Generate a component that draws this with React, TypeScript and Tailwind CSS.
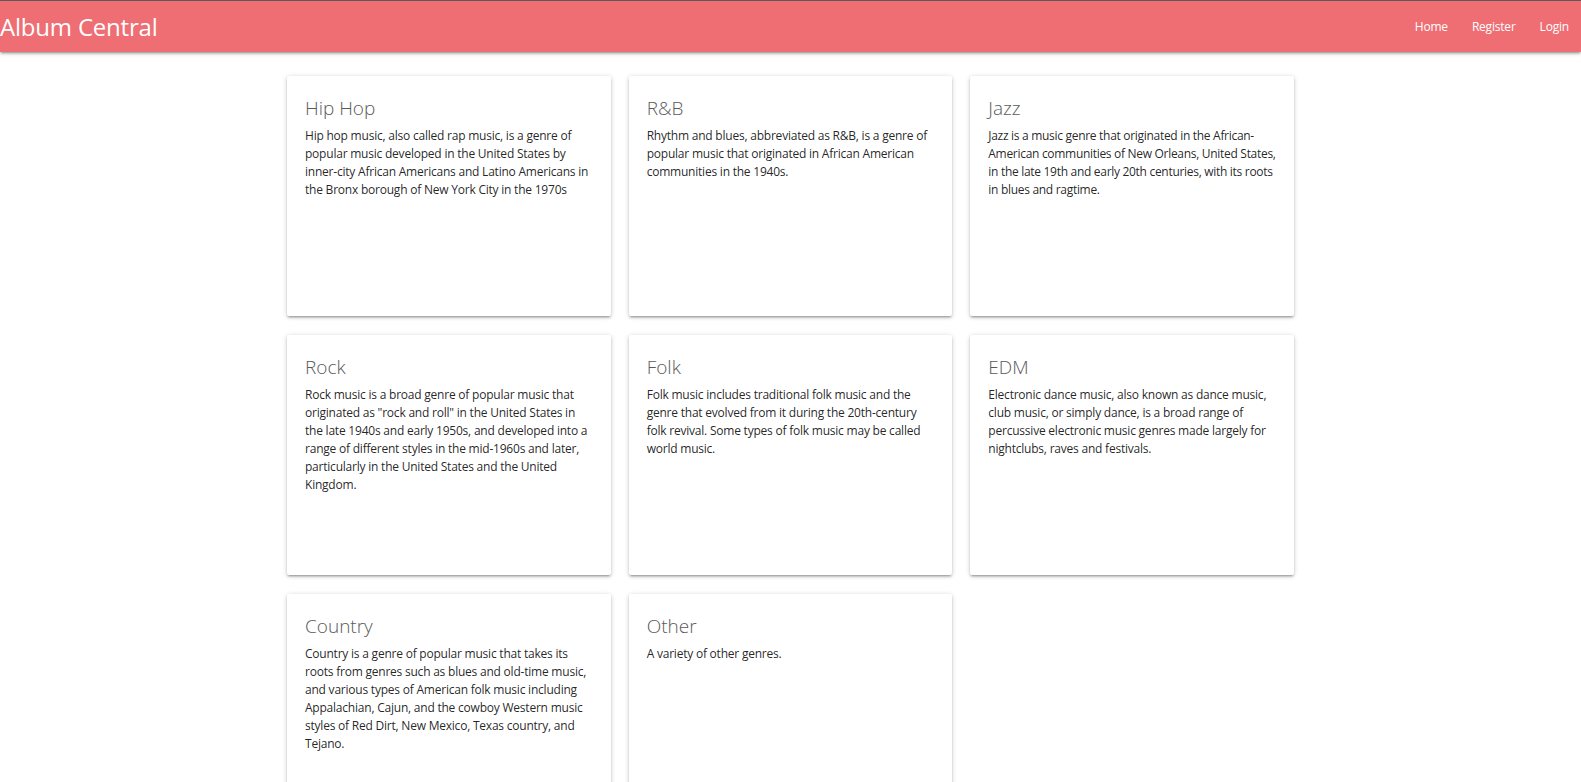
import clsx from "clsx";

const genres = [
  {
    title: "Hip Hop",
    text: "Hip hop music, also called rap music, is a genre of popular music developed in the United States by inner-city African Americans and Latino Americans in the Bronx borough of New York City in the 1970s",
  },
  {
    title: "R&B",
    text: "Rhythm and blues, abbreviated as R&B, is a genre of popular music that originated in African American communities in the 1940s.",
  },
  {
    title: "Jazz",
    text: "Jazz is a music genre that originated in the African-American communities of New Orleans, United States, in the late 19th and early 20th centuries, with its roots in blues and ragtime.",
    tight: true,
  },
  {
    title: "Rock",
    text: 'Rock music is a broad genre of popular music that originated as "rock and roll" in the United States in the late 1940s and early 1950s, and developed into a range of different styles in the mid-1960s and later, particularly in the United States and the United Kingdom.',
  },
  {
    title: "Folk",
    text: "Folk music includes traditional folk music and the genre that evolved from it during the 20th-century folk revival. Some types of folk music may be called world music.",
  },
  {
    title: "EDM",
    text: "Electronic dance music, also known as dance music, club music, or simply dance, is a broad range of percussive electronic music genres made largely for nightclubs, raves and festivals.",
  },
  {
    title: "Country",
    text: "Country is a genre of popular music that takes its roots from genres such as blues and old-time music, and various types of American folk music including Appalachian, Cajun, and the cowboy Western music styles of Red Dirt, New Mexico, Texas country, and Tejano.",
  },
  {
    title: "Other",
    text: "A variety of other genres.",
  },
];

const shadow =
  "shadow-[0_2px_2px_0_rgba(0,0,0,0.14),0_3px_1px_-2px_rgba(0,0,0,0.12),0_1px_5px_0_rgba(0,0,0,0.2)]";

function Navbar() {
  return (
    <nav
      className={clsx(
        "h-[52px] border-t border-[#5a5a5a] bg-[#ee6e73] text-white flex items-center justify-between relative z-10",
        shadow
      )}
    >
      <a className="text-[24px] leading-none tracking-[-0.2px]">Album Central</a>
      <ul className="flex text-[12px] tracking-[-0.2px]">
        <li className="px-3">Home</li>
        <li className="px-3">Register</li>
        <li className="px-3">Login</li>
      </ul>
    </nav>
  );
}

function GenreCard({
  title,
  text,
  tight,
}: {
  title: string;
  text: string;
  tight?: boolean;
}) {
  return (
    <div
      className={clsx(
        "h-[240px] bg-white rounded-[2px] pt-[19px] pl-[18px]",
        tight ? "pr-[10px]" : "pr-[18px]",
        shadow
      )}
    >
      <div className="text-[19px] leading-[26px] font-light text-[#5a5a5a] mb-[6px]">
        {title}
      </div>
      <p
        className={clsx(
          "text-[12px] leading-[18px] text-[rgba(0,0,0,0.87)]",
          tight ? "tracking-[-0.3px]" : "tracking-[-0.22px]"
        )}
      >
        {text}
      </p>
    </div>
  );
}

export default function App() {
  return (
    <div className="min-h-screen bg-white font-['Open_Sans',sans-serif]">
      <Navbar />
      <main className="w-[1007px] mx-auto pt-6 grid grid-cols-3 gap-x-[18px] gap-y-[19px]">
        {genres.map((g) => (
          <GenreCard key={g.title} title={g.title} text={g.text} tight={g.tight} />
        ))}
      </main>
    </div>
  );
}
